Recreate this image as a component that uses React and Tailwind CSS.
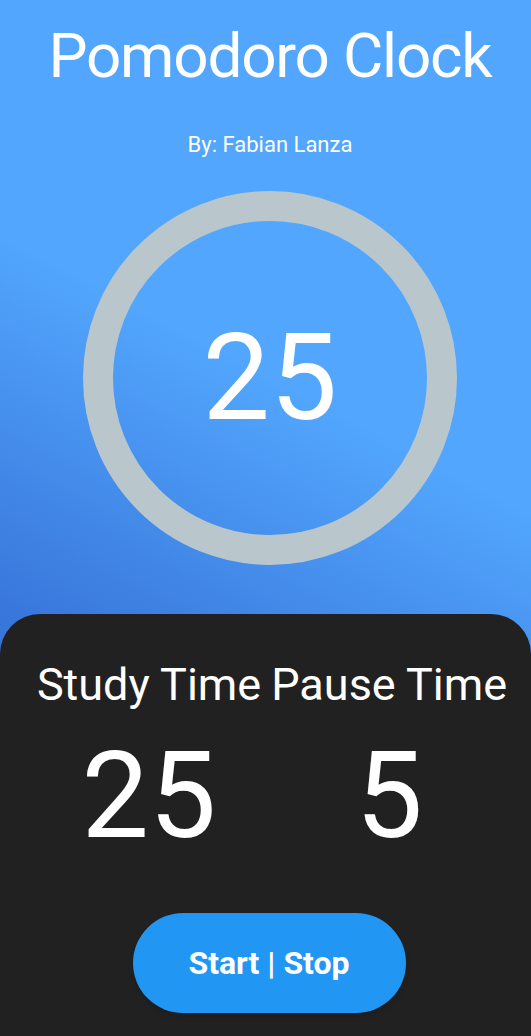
import React from "react";

function TimeColumn({ label, value }) {
  return (
    <div className="flex flex-col items-center">
      <span className="text-[45px] leading-none whitespace-nowrap">{label}</span>
      <span className="mt-[29px] text-[120px] leading-none">{value}</span>
    </div>
  );
}

export default function App() {
  return (
    <div
      className="flex h-[1036px] w-full flex-col overflow-hidden bg-[linear-gradient(28deg,#3471d8_25%,#3977dc_33%,#52a6fd_61%)] text-white"
      style={{ fontFamily: "Roboto, 'Noto Sans', sans-serif" }}
    >
      <div className="flex flex-col items-center pl-[9px]">
        <h1 className="mt-[25px] text-[62px] leading-none font-normal tracking-[-1.2px]">Pomodoro Clock</h1>
        <p className="mt-[47px] text-[22px] leading-none">By: Fabian Lanza</p>
        <div className="mt-[35px] flex h-[374px] w-[374px] items-center justify-center rounded-full border-[30px] border-[#b9c7cc]">
          <span className="text-[120px] leading-none">25</span>
        </div>
      </div>

      <div className="mt-[49px] flex flex-1 flex-col items-center rounded-t-[40px] bg-[#212121] pl-[13px] pt-[48px]">
        <div className="flex gap-[10px]">
          <TimeColumn label="Study Time" value="25" />
          <TimeColumn label="Pause Time" value="5" />
        </div>
        <button className="mt-[57px] mr-[6px] h-[100px] w-[273px] rounded-full bg-[#2196f3] text-[32px] font-bold shadow-md">
          Start | Stop
        </button>
      </div>
    </div>
  );
}
